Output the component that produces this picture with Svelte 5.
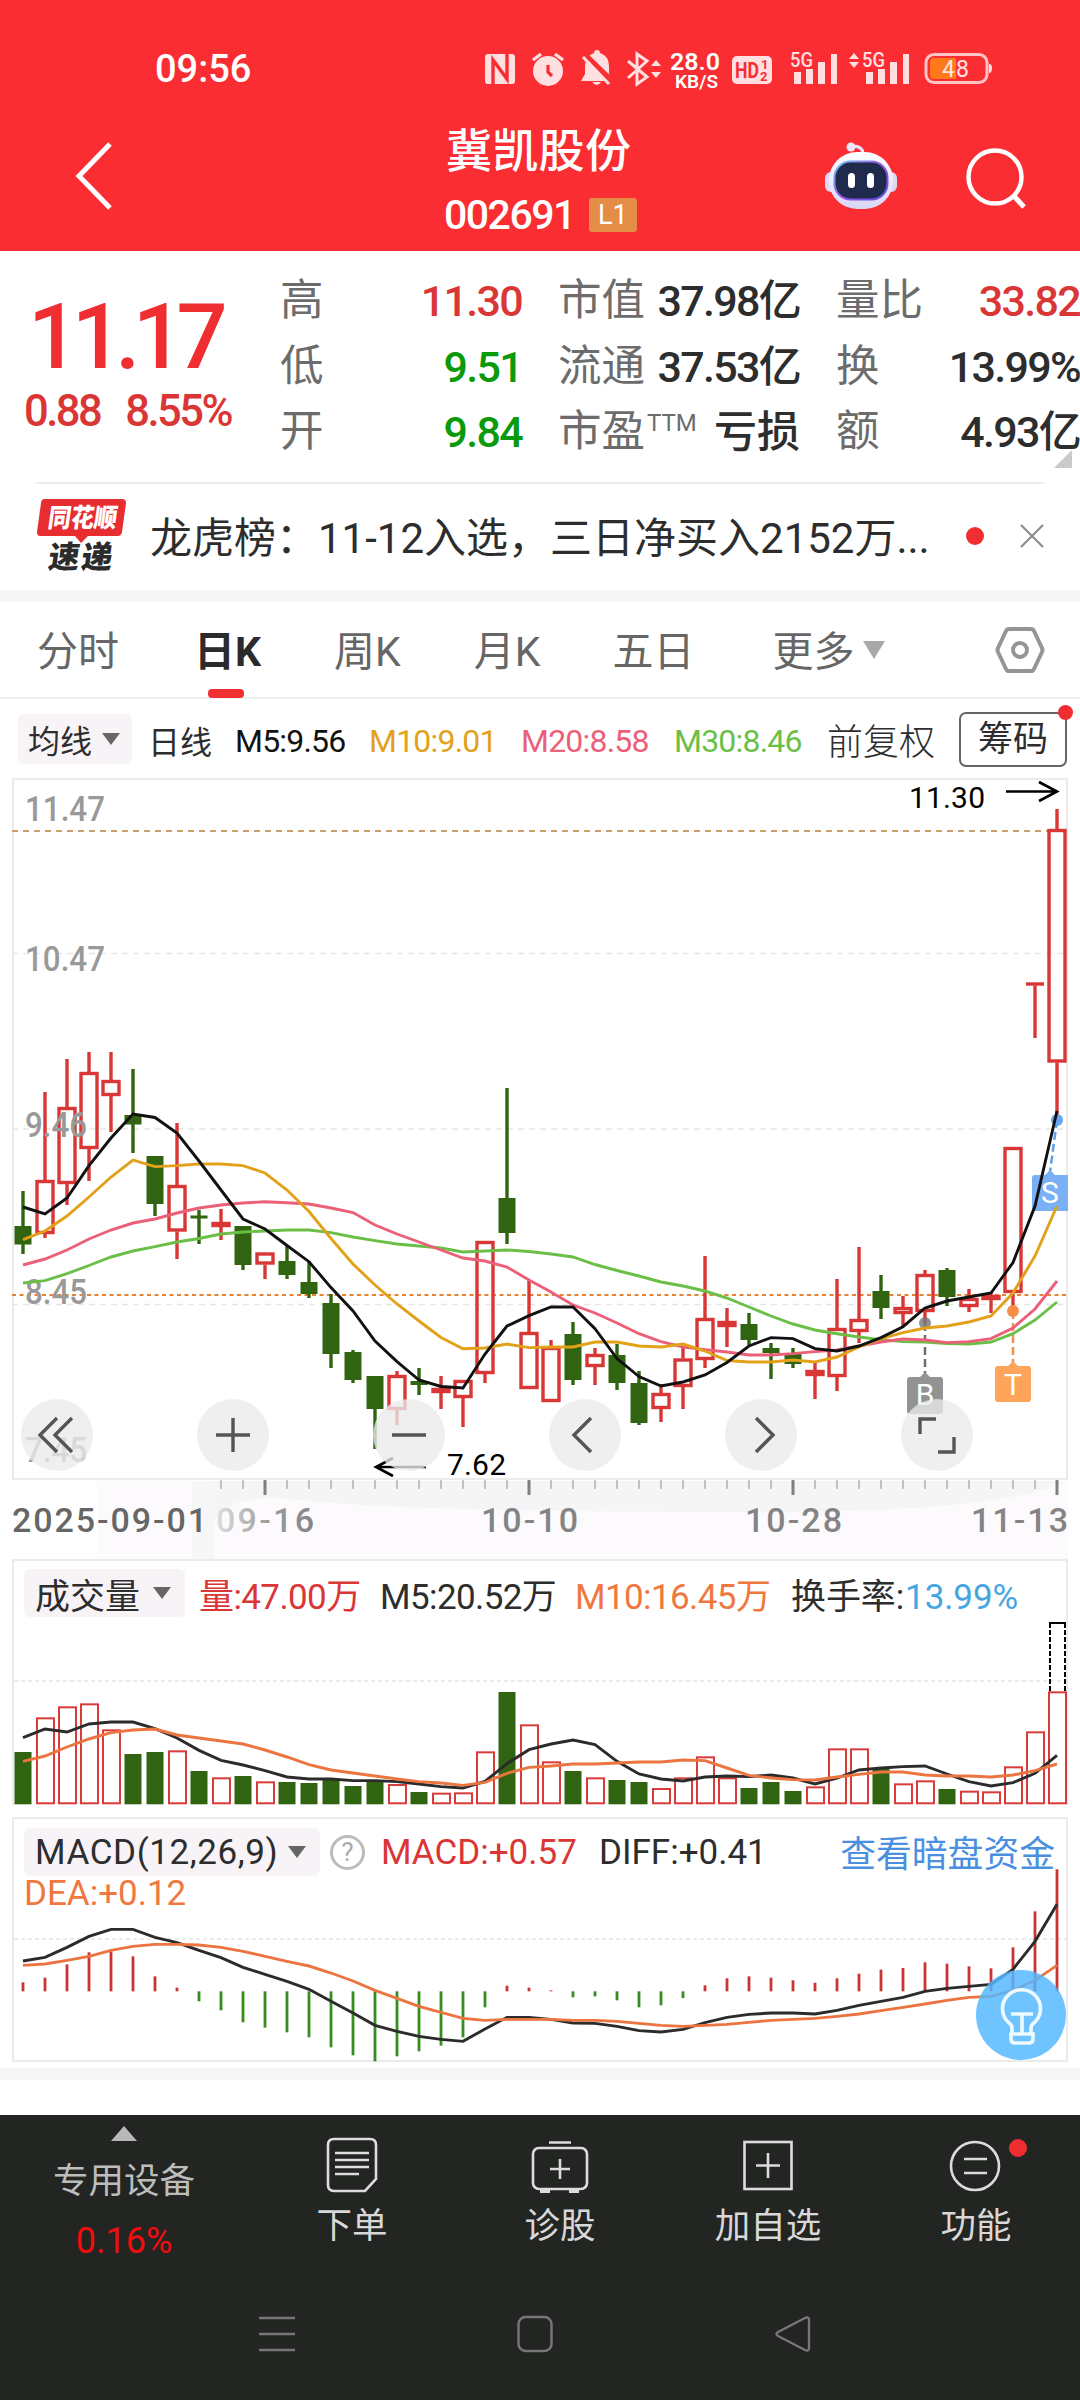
<script lang="ts">
  interface Candle {
    up: boolean;
    high: number;
    top: number;
    bottom: number;
    low: number;
  }

  const STEP = 22;
  const START = 23;
  const x = (i: number) => START + i * STEP;

  // [up, high, body top, body bottom, low] in plot units
  const rawCandles: number[][] = [
    [0, 1191, 1226, 1244.5, 1254], [1, 1092, 1180, 1234, 1238], [1, 1059, 1107, 1184, 1205],
    [1, 1052, 1072, 1149, 1181], [1, 1052, 1080, 1096, 1132], [0, 1069, 1115, 1124.5, 1153],
    [0, 1156, 1156, 1204, 1216], [1, 1123, 1185, 1231.5, 1259], [0, 1210, 1215.5, 1218.5, 1244],
    [1, 1209, 1222, 1227, 1240], [0, 1226, 1226, 1265, 1270], [1, 1252.5, 1252.5, 1264.5, 1279],
    [0, 1245, 1261, 1275, 1279], [0, 1261, 1282, 1294, 1298], [0, 1294, 1303, 1354, 1368],
    [0, 1350, 1352, 1380, 1383], [0, 1376, 1376, 1409, 1449], [1, 1371, 1375, 1410, 1425],
    [0, 1368, 1381, 1385, 1395], [1, 1376, 1388, 1393, 1409], [1, 1380, 1380, 1398, 1427],
    [1, 1241, 1241, 1374, 1383], [0, 1088, 1198, 1233, 1244], [1, 1280, 1332, 1389, 1389],
    [1, 1340, 1347, 1402, 1402], [0, 1322, 1334, 1380, 1385], [1, 1348, 1354, 1367, 1385],
    [0, 1344, 1355, 1383, 1390], [0, 1371, 1383, 1423, 1425], [1, 1384, 1393, 1409, 1422],
    [1, 1346, 1358.5, 1387, 1409], [1, 1256, 1318, 1360, 1368], [1, 1308, 1321, 1327, 1347],
    [0, 1313, 1324, 1340, 1345], [0, 1343, 1348, 1353, 1379], [0, 1348, 1354, 1364, 1368],
    [1, 1363, 1370, 1376, 1399], [1, 1279, 1328, 1377, 1391], [1, 1247, 1319, 1332, 1343],
    [0, 1275, 1291, 1308, 1319], [1, 1296, 1307, 1314, 1326], [1, 1270, 1274, 1312, 1323],
    [0, 1268, 1270, 1297, 1306], [1, 1289, 1298, 1307, 1312], [1, 1292, 1295, 1300, 1313],
    [1, 1147, 1147, 1293, 1312], [1, 982.5, 982.5, 985.5, 1038], [1, 809, 829, 1062.5, 1120],
  ];
  const candles: Candle[] = rawCandles.map(([up, high, top, bottom, low]) => ({
    up: up === 1, high, top, bottom, low,
  }));

  const averages = [
    { color: "#6abf47", values: [1283, 1280.6, 1273.6, 1265.5, 1257, 1251, 1246.6, 1242, 1238.5, 1234, 1232, 1231, 1230, 1230, 1232.6, 1237, 1240.6, 1244, 1246, 1248, 1252, 1251, 1250, 1251.5, 1254, 1257, 1264.5, 1270.5, 1276, 1282, 1286, 1291, 1298, 1307, 1316, 1324, 1330, 1333.7, 1337, 1339.6, 1341.6, 1342, 1343.6, 1344, 1342, 1333.7, 1320, 1302] },
    { color: "#ec5f78", values: [1265, 1259, 1250, 1239, 1230, 1223, 1219, 1213, 1208, 1205, 1203, 1201.7, 1202.8, 1204, 1208, 1212.6, 1225, 1234, 1242, 1250, 1258, 1261, 1267, 1280, 1292, 1305, 1313, 1323, 1333.7, 1341.6, 1347, 1349.6, 1352, 1355, 1355, 1353.6, 1351.6, 1350, 1346, 1342, 1339, 1340, 1342.6, 1341.6, 1338.6, 1328, 1309, 1281] },
    { color: "#e3a11a", values: [1239.6, 1231, 1216, 1197, 1177, 1160, 1166.6, 1165.6, 1164, 1164, 1165.6, 1173, 1190, 1211.5, 1238.5, 1264, 1285, 1304, 1321, 1337.5, 1348.7, 1348, 1344, 1347.6, 1347, 1347, 1342, 1342, 1346, 1347, 1344, 1351, 1360.5, 1362, 1362, 1360, 1362, 1357, 1347, 1338.6, 1332.7, 1328, 1326, 1322, 1316, 1293, 1256, 1206] },
    { color: "#111111", values: [1207, 1214, 1198, 1165.6, 1138, 1114, 1117.5, 1133, 1161, 1190, 1219, 1229, 1245.5, 1261.7, 1287.6, 1311, 1341, 1361.6, 1380, 1386.5, 1388, 1354, 1326, 1315.7, 1307, 1307, 1328.7, 1358.5, 1376.5, 1386, 1382, 1375, 1362.5, 1346, 1337.6, 1338.6, 1348.6, 1351, 1346, 1337.6, 1326.7, 1308, 1301, 1297, 1293, 1262.5, 1206, 1111] },
  ];

  // Lower panels are stored in thirds of a pixel
  const volumes = [636, 532, 499, 490, 568, 642, 636, 631, 693, 712, 708, 724, 726, 729, 720, 738, 726, 732, 756, 758, 757, 634, 456, 553, 664, 693, 712, 720, 726, 744, 712, 649, 712, 744, 726, 753, 739, 625, 625, 684, 730, 721, 747, 752, 754, 679, 574, 454];
  const volumeDown = [0, 5, 6, 8, 10, 12, 13, 14, 15, 16, 18, 22, 25, 27, 28, 33, 34, 35, 39, 42];
  const volM5 = [593, 567, 576, 552, 546, 546, 566, 594, 631, 661, 675, 692, 711, 717, 717, 722, 722, 725, 732, 740, 744, 724, 671, 629, 612, 600, 614, 664, 702, 717, 723, 711, 708, 710, 705, 714, 732, 714, 690, 684, 680, 678, 702, 725, 738, 728, 700, 646];
  const volM10 = [664, 648, 621, 597, 578, 570, 567, 585, 594, 603, 612, 630, 651, 674, 690, 699, 708, 717, 725, 729, 736, 727, 700, 682, 678, 672, 672, 669, 666, 666, 660, 662, 684, 706, 714, 719, 720, 711, 703, 696, 696, 705, 708, 708, 711, 705, 692, 672];
  const volY = (v: number) => (v - 57) / 3;

  const ZERO = 573;
  const macd = [546, 532, 492, 456, 454, 468, 528, 562, 603, 630, 666, 682, 696, 711, 741, 765, 783, 768, 753, 736, 711, 621, 556, 562, 570, 591, 588, 600, 621, 615, 593, 555, 534, 528, 532, 540, 547, 534, 520, 508, 503, 486, 490, 498, 504, 441, 333, 207];
  const diff = [482, 471, 441, 408, 387, 387, 411, 427, 450, 472, 501, 522, 543, 567, 603, 638, 675, 693, 708, 717, 723, 686, 651, 651, 657, 668, 669, 678, 691, 695, 687, 667, 651, 642, 638, 638, 641, 630, 615, 603, 591, 573, 564, 558, 552, 507, 423, 312];
  const dea = [495, 491, 480, 468, 450, 438, 432, 432, 434, 441, 453, 468, 483, 497, 518, 542, 570, 594, 618, 636, 654, 660, 657, 657, 657, 660, 660, 663, 669, 675, 678, 675, 672, 666, 660, 657, 654, 648, 641, 631, 621, 611, 600, 591, 588, 570, 540, 495];
  const macdY = (v: number) => (v - 50) / 3;

  const line = (values: number[], y = (v: number) => v) =>
    values.map((v, i) => `${x(i)},${y(v)}`).join(" ");

  const ticks = Array.from({ length: 39 }, (_, i) => i + 9);
  const isMajor = (i: number) => i % 12 === 11;

  const priceLabels = [
    { text: "11.47", y: 821, w: 80 },
    { text: "10.47", y: 971, w: 80 },
    { text: "9.46", y: 1137, w: 62 },
    { text: "8.45", y: 1304, w: 62 },
    { text: "7.45", y: 1462, w: 62 },
  ];
  const dates = [
    { text: "2025-09-01", x: 12, w: 195, color: "#666" },
    { text: "09-16", x: 216, w: 98, color: "url(#fade)" },
    { text: "10-10", x: 481, w: 97, color: "#848484" },
    { text: "10-28", x: 745, w: 97, color: "#848484" },
    { text: "11-13", x: 971, w: 97, color: "#848484" },
  ];

  const tabs = [
    { name: "分时", left: 37 },
    { name: "日K", left: 75 },
    { name: "周K", left: 73 },
    { name: "月K", left: 73 },
    { name: "五日", left: 72 },
    { name: "更多", left: 78 },
  ];
  let activeTab = "日K";

  const controls = [
    "M51 19 L34 36 L51 53 M36 19 L19 36 L36 53",
    "M19 36 H53 M36 19 V53",
    "M19 36 H53",
    "M42 19 L25 36 L42 53",
    "M31 19 L48 36 L31 53",
    "M19 35 V20 H35 M53 38 V53 H37",
  ];
</script>

<main class="page">
  <header class="top">
    <div class="status">
      <span class="clock">09:56</span>
      <svg class="status-icons" viewBox="480 40 520 60" width="520" height="60">
        <g fill="#ffdfe0">
          <rect x="485" y="54" width="30" height="30" rx="3" />
          <path d="M493 84 V60 L507 79 V54" fill="none" stroke="#fa2d33" stroke-width="3.4" />
          <circle cx="548" cy="71" r="15" />
          <path d="M533 60 L541 54 M563 60 L555 54" stroke="#ffdfe0" stroke-width="3.4" />
          <path d="M548 65 V72 L552 76" fill="none" stroke="#fa2d33" stroke-width="3.2" />
          <path d="M594 53 a3 3 0 0 1 6 0 q9 3 9 13 v8 l3 7 h-31 l4 -7 v-8 q0 -10 9 -13z M592 82 h9 q-4 6 -9 0z" />
          <path d="M583 54 L613 83" stroke="#fa2d33" stroke-width="7" />
          <path d="M583 57 L609 84" stroke="#ffdfe0" stroke-width="3" />
          <path d="M628 61 L647 77 L637 84 V54 L647 61 L628 78" fill="none" stroke="#ffdfe0" stroke-width="3" />
          <path d="M651 66 l5 -6 l5 6z M651 72 h10 l-5 6z" />
          <rect x="732" y="56" width="40" height="28" rx="5" />
          <path d="M794 72h7v12h-7z M806 69h7v15h-7z M818 62h7v22h-7z M831 54h6v30h-6z" />
          <path d="M866 72h7v12h-7z M878 69h7v15h-7z M890 62h7v22h-7z M903 54h6v30h-6z" />
          <path d="M849 59 l5 -6 l5 6z M849 62 h10 l-5 6z" />
          <path d="M989 64 q3 0 3 4 q0 5 -3 5z" />
        </g>
        <text x="670" y="69.500" font-size="24" font-weight="600" fill="#fff" textLength="50" lengthAdjust="spacingAndGlyphs">28.0</text>
        <text x="675" y="87.500" font-size="17.500" font-weight="600" fill="#fff" textLength="43" lengthAdjust="spacingAndGlyphs">KB/S</text>
        <text x="735" y="78" font-size="22" font-weight="700" fill="#fa2d33" textLength="24" lengthAdjust="spacingAndGlyphs">HD</text>
        <text x="761" y="69" font-size="13" font-weight="700" fill="#fa2d33">1</text>
        <text x="760" y="81" font-size="13" font-weight="700" fill="#fa2d33">2</text>
        <text x="790" y="67" font-size="20" font-weight="500" fill="#ffdfe0" textLength="23" lengthAdjust="spacingAndGlyphs">5G</text>
        <text x="862" y="67" font-size="20" font-weight="500" fill="#ffdfe0" textLength="23" lengthAdjust="spacingAndGlyphs">5G</text>
        <rect x="926" y="54.500" width="61" height="28" rx="8" fill="none" stroke="#ffc4c5" stroke-width="3" />
        <path d="M956 58 H934 q-4 0 -4 4 v13 q0 4 4 4 H956z" fill="#ff7a1c" />
        <text x="942" y="77" font-size="23" fill="#ffe4e0" textLength="27">48</text>
      </svg>
    </div>
    <div class="title-bar">
      <svg class="back" width="40" height="70" viewBox="0 0 40 70"><path d="M35 3 L4 35 L35 67" fill="none" stroke="#fff" stroke-width="5" /></svg>
      <div class="stock">
        <h1>冀凯股份</h1>
        <p><span class="code">002691</span><span class="level">L1</span></p>
      </div>
      <svg class="robot" width="72" height="68" viewBox="0 0 72 68">
        <defs>
          <linearGradient id="shell" x1="0" y1="0" x2="0" y2="1"><stop offset="0" stop-color="#fff" /><stop offset="1" stop-color="#d9d6f6" /></linearGradient>
          <linearGradient id="rim" x1="0" y1="0" x2="1" y2="1"><stop offset="0" stop-color="#6fc8f2" /><stop offset=".5" stop-color="#9a52e8" /><stop offset="1" stop-color="#5c4fd8" /></linearGradient>
        </defs>
        <path d="M38 12 q0 -8 -11 -8" fill="none" stroke="#e9e4f8" stroke-width="3" />
        <circle cx="26" cy="5" r="4.500" fill="#ece6fb" />
        <rect x="0" y="30" width="14" height="20" rx="6" fill="#ddd8f6" />
        <rect x="58" y="30" width="14" height="20" rx="6" fill="#ddd8f6" />
        <rect x="4" y="10" width="64" height="57" rx="28" fill="url(#shell)" />
        <rect x="9.500" y="19.500" width="53" height="38" rx="16" fill="#1f2a4d" stroke="url(#rim)" stroke-width="2" />
        <rect x="23" y="31" width="7" height="15" rx="3.500" fill="#fff" />
        <rect x="42" y="31" width="7" height="15" rx="3.500" fill="#fff" />
      </svg>
      <svg class="search" width="64" height="64" viewBox="0 0 64 64"><circle cx="30" cy="30" r="26.500" fill="none" stroke="#fff" stroke-width="4.500" /><path d="M48 48 L59 60" stroke="#fff" stroke-width="5" /></svg>
    </div>
  </header>

  <section class="quote">
    <div class="price">
      <strong>11.17</strong>
      <p><span>0.88</span><span>8.55%</span></p>
    </div>
    <dl class="metrics first">
      <div><dt>高</dt><dd class="red">11.30</dd></div>
      <div><dt>低</dt><dd class="green">9.51</dd></div>
      <div><dt>开</dt><dd class="green">9.84</dd></div>
    </dl>
    <dl class="metrics second">
      <div><dt>市值</dt><dd>37.98亿</dd></div>
      <div><dt>流通</dt><dd>37.53亿</dd></div>
      <div><dt>市盈<sup>TTM</sup></dt><dd class="loss">亏损</dd></div>
    </dl>
    <dl class="metrics third">
      <div><dt>量比</dt><dd class="red">33.82</dd></div>
      <div><dt>换</dt><dd>13.99%</dd></div>
      <div><dt>额</dt><dd>4.93亿</dd></div>
    </dl>
    <i class="corner"></i>
  </section>

  <section class="news">
    <svg class="brand" width="90" height="76" viewBox="0 0 90 76">
      <path d="M7 0 H85 q4 0 4 4 L85 33 q-1 4 -4 4 H51 L44 44 L38 37 H3 q-3 0 -3 -4 L4 4 q0 -4 4 -4z" fill="#e82d30" />
      <text x="14" y="28" font-size="26" font-weight="900" fill="#fff" textLength="69" lengthAdjust="spacingAndGlyphs" transform="skewX(-8)">同花顺</text>
      <text x="20" y="69" font-size="31" font-weight="900" fill="#2b2b2b" textLength="64" transform="skewX(-8)">速递</text>
    </svg>
    <p>龙虎榜：11-12入选，三日净买入2152万...</p>
    <i class="dot"></i>
    <svg width="26" height="26" viewBox="0 0 26 26"><path d="M2 2 L24 24 M24 2 L2 24" stroke="#8e8e8e" stroke-width="2.200" /></svg>
  </section>

  <nav class="tabs">
    {#each tabs as tab (tab.name)}
      <button
        class="tab"
        class:active={tab.name === activeTab}
        style="margin-left: {tab.left}px"
        on:click={() => (activeTab = tab.name)}
      >{tab.name}</button>
    {/each}
    <i class="caret big"></i>
    <svg class="gear" width="50" height="48" viewBox="0 0 50 48">
      <path d="M14 3 H36 q2 0 3 2 L47 22 q1 2 0 4 L39 43 q-1 2 -3 2 H14 q-2 0 -3 -2 L3 26 q-1 -2 0 -4 L11 5 q1 -2 3 -2z" fill="none" stroke="#959595" stroke-width="4" />
      <circle cx="25" cy="24" r="7" fill="none" stroke="#959595" stroke-width="4" />
    </svg>
  </nav>

  <div class="ma-row">
    <span class="pill">均线<i class="caret"></i></span>
    <span class="period">日线</span>
    <span class="ma m5">M5:9.56</span>
    <span class="ma m10">M10:9.01</span>
    <span class="ma m20">M20:8.58</span>
    <span class="ma m30">M30:8.46</span>
    <span class="adjust">前复权</span>
    <span class="chips">筹码<i class="dot"></i></span>
  </div>

  <section class="kline">
    <svg width="1080" height="781" viewBox="0 778 1080 781">
      <defs>
        <linearGradient id="fade"><stop offset="0" stop-color="#dedede" /><stop offset=".5" stop-color="#a0a0a0" /><stop offset="1" stop-color="#848484" /></linearGradient>
      </defs>
      <!-- soft band behind the date axis -->
      <rect x="97" y="1481" width="971" height="78" fill="#fdfafd" />
      <rect x="192" y="1481" width="22" height="78" fill="#f7f7f7" />
      <path d="M214 1481 H1068 Q1000 1512 760 1512 Q400 1512 300 1500 Q230 1492 214 1520z" fill="#f6f5f6" />
      <rect x="13" y="779" width="1054" height="700" fill="#fff" stroke="#ebebeb" stroke-width="2" />

      <path d="M12 953.500 H1067 M12 1129 H1067 M12 1304.500 H1067" stroke="#e6e6e6" stroke-width="1.500" stroke-dasharray="6 5" />
      <path d="M12 831 H1048" stroke="#c9a06b" stroke-width="2" stroke-dasharray="6 5" />
      <path d="M12 1295 H1067" stroke="#e8822f" stroke-width="2" stroke-dasharray="4 3.500" />

      {#each candles as c, i}
        {#if c.up}
          <g stroke="#d93636" stroke-width="3.400" fill="none">
            <path d="M{x(i)} {c.high} V{c.top} M{x(i)} {c.bottom} V{c.low}" />
            {#if c.bottom - c.top > 4}
              <rect x={x(i) - 8} y={c.top + 1.5} width="16" height={c.bottom - c.top - 3} />
            {:else}
              <path d="M{x(i) - 9} {(c.top + c.bottom) / 2} h18" />
            {/if}
          </g>
        {:else}
          <path d="M{x(i)} {c.high} V{c.low}" stroke="#306410" stroke-width="3.400" />
          <rect x={x(i) - 8.5} y={c.top} width="17" height={c.bottom - c.top} fill="#306410" />
        {/if}
      {/each}

      {#each priceLabels as label}
        <text x="25" y={label.y} class="price-label" textLength={label.w} lengthAdjust="spacingAndGlyphs">{label.text}</text>
      {/each}

      <!-- trade markers -->
      <g fill="none" stroke-width="2.500" stroke-dasharray="8 4">
        <path d="M925 1323 V1375" stroke="#6e6e6e" />
        <path d="M1013 1311 V1363" stroke="#f0924a" />
        <path d="M1057 1120 L1050 1172" stroke="#5b9df0" />
      </g>
      <circle cx="925" cy="1323" r="6" fill="#777" opacity=".8" />
      <circle cx="1013" cy="1311" r="6" fill="#f58d48" />
      <circle cx="1057" cy="1120" r="6" fill="#6ba5ef" />
      <path d="M910 1377 h10 l5 -5 l5 5 h10 q3 0 3 3 v31 q0 3 -3 3 h-30 q-3 0 -3 -3 v-31 q0 -3 3 -3z" fill="#929392" />
      <path d="M998 1366 h10 l5 -5 l5 5 h10 q3 0 3 3 v30 q0 3 -3 3 h-30 q-3 0 -3 -3 v-30 q0 -3 3 -3z" fill="#fea55b" />
      <path d="M1035 1175 h10 l5 -5 l5 5 h13 v36 h-33 q-3 0 -3 -3 v-30 q0 -3 3 -3z" fill="#7ab0f5" />
      <g class="marker" text-anchor="middle">
        <text x="925" y="1405">B</text>
        <text x="1013" y="1395">T</text>
        <text x="1050" y="1203">S</text>
      </g>

      {#each averages as avg}
        <polyline points={line(avg.values)} fill="none" stroke={avg.color} stroke-width="2.900" />
      {/each}

      <g class="extreme">
        <text x="909" y="808" textLength="76">11.30</text>
        <text x="447" y="1475" textLength="59">7.62</text>
        <path d="M1006 791.500 H1057 M1039 782 L1057 791.500 L1039 801" />
        <path d="M426 1467 H376 M393 1458 L376 1467 L393 1476" />
      </g>

      {#each ticks as i}
        <path
          d="M{x(i)} 1480 V{isMajor(i) ? 1495 : 1489}"
          stroke={isMajor(i) ? "#808080" : "#a0a0a0"}
          stroke-width={isMajor(i) ? 3 : 1.2}
        />
      {/each}
      {#each dates as d}
        <text x={d.x} y="1532" class="date" fill={d.color} textLength={d.w}>{d.text}</text>
      {/each}
    </svg>
    <div class="controls">
      {#each controls as icon}
        <button aria-label="chart control"><svg width="72" height="72" viewBox="0 0 72 72"><path d={icon} fill="none" stroke="#555" stroke-width="3.400" /></svg></button>
      {/each}
    </div>
  </section>

  <section class="panel volume">
    <svg class="plot" width="1080" height="246" viewBox="0 0 1080 246">
      <path d="M13 246 V1 H1067 V246" fill="none" stroke="#ebebeb" stroke-width="2" />
      <path d="M14 122 H1067" stroke="#e6e6e6" stroke-width="1.500" stroke-dasharray="4 3" />
      {#each volumes as v, i}
        {#if volumeDown.includes(i)}
          <rect x={x(i) - 8.5} y={volY(v)} width="17" height={245.3 - volY(v)} fill="#306410" />
        {:else}
          <rect x={x(i) - 8} y={volY(v) + 1} width="17" height={243.3 - volY(v)} fill="#fff" stroke="#d93a3a" stroke-width="2" />
        {/if}
      {/each}
      <path d="M1050 132 V63 M1065 132 V63" stroke="#000" stroke-width="2" stroke-dasharray="5 2" />
      <path d="M1049 64 H1066" stroke="#000" stroke-width="2" />
      <polyline points={line(volM5, volY)} fill="none" stroke="#2b2b2b" stroke-width="2.900" />
      <polyline points={line(volM10, volY)} fill="none" stroke="#ec7440" stroke-width="2.900" />
    </svg>
    <div class="legend">
      <span class="pill">成交量<i class="caret"></i></span>
      <span class="vol red">量:47.00万</span>
      <span class="vol5">M5:20.52万</span>
      <span class="vol10 orange">M10:16.45万</span>
      <span class="rate">换手率:<em>13.99%</em></span>
    </div>
  </section>

  <section class="panel macd">
    <svg class="plot" width="1080" height="246" viewBox="0 0 1080 246">
      <rect x="13" y="1" width="1054" height="243" fill="none" stroke="#ebebeb" stroke-width="2" />
      <path d="M14 122 H1067" stroke="#e6e6e6" stroke-width="1.500" stroke-dasharray="4 3" />
      {#each macd as v, i}
        <path d="M{x(i)} {macdY(ZERO)} V{macdY(v)}" stroke={v > ZERO ? "#348f20" : "#c93434"} stroke-width="2.800" />
      {/each}
      <polyline points={line(diff, macdY)} fill="none" stroke="#2b2b2b" stroke-width="2.900" />
      <polyline points={line(dea, macdY)} fill="none" stroke="#ec7440" stroke-width="2.900" />
    </svg>
    <div class="legend">
      <span class="pill">MACD(12,26,9)<i class="caret"></i></span>
      <span class="help">?</span>
      <span class="macd-value red">MACD:+0.57</span>
      <span class="diff-value">DIFF:+0.41</span>
      <a href="#fund">查看暗盘资金</a>
    </div>
    <p class="dea orange">DEA:+0.12</p>
    <button class="bulb" aria-label="tips">
      <svg width="90" height="90" viewBox="0 0 90 90">
        <g fill="none" stroke="#eefaff" stroke-width="3.600">
          <path d="M36 64 V58 q0 -3 -3 -5 a19 19 0 1 1 25 0 q-3 2 -3 5 V64" />
          <path d="M35 64 H57 V69 q0 4 -4 4 H39 q-4 0 -4 -4z M35 44 H57 M46 44 V64" />
        </g>
      </svg>
    </button>
  </section>

  <footer class="bottom">
    <div class="actions">
      <div class="sector">
        <i class="up"></i>
        <span>专用设备</span>
        <b>0.16%</b>
      </div>
      <div class="action order">
        <svg width="60" height="60" viewBox="0 0 60 60"><g fill="none" stroke="#dcdcdc" stroke-width="2.600"><path d="M12 4 H48 q6 0 6 6 V44 L43 56 H12 q-6 0 -6 -6 V10 q0 -6 6 -6z" /><path d="M13 18 H47 M13 25 H47 M13 32 H47 M13 39 H37" /></g></svg>
        <span>下单</span>
      </div>
      <div class="action check">
        <svg width="60" height="60" viewBox="0 0 60 60"><g fill="none" stroke="#dcdcdc" stroke-width="2.600"><rect x="3" y="13" width="54" height="41" rx="6" /><path d="M19 7.500 H41 M20 34 H40 M30 24 V44" /><path d="M10 56 h10 M39 56 h10" stroke-width="4" /></g></svg>
        <span>诊股</span>
      </div>
      <div class="action add">
        <svg width="60" height="60" viewBox="0 0 60 60"><g fill="none" stroke="#dcdcdc" stroke-width="2.600"><rect x="6.500" y="7" width="47" height="47" /><path d="M18 30.500 H42 M30 18 V43" /></g></svg>
        <span>加自选</span>
      </div>
      <div class="action more">
        <svg width="60" height="60" viewBox="0 0 60 60"><g fill="none" stroke="#dcdcdc" stroke-width="2.600"><circle cx="29" cy="31" r="24" /><path d="M18 24 H41 M18 38 H41" /></g></svg>
        <span>功能</span>
        <i class="dot"></i>
      </div>
    </div>
    <div class="system">
      <svg width="40" height="40" viewBox="0 0 40 40"><path d="M2 4 H38 M2 20 H38 M2 36 H38" stroke="#777" stroke-width="2.600" /></svg>
      <svg width="40" height="40" viewBox="0 0 40 40"><rect x="3.500" y="3" width="33" height="34" rx="7" fill="none" stroke="#777" stroke-width="2.400" /></svg>
      <svg width="40" height="40" viewBox="0 0 40 40"><path d="M32 4 L5 18 q-3 2 0 4 L32 36 q4 2 4 -2 V6 q0 -4 -4 -2z" fill="none" stroke="#777" stroke-width="2.400" /></svg>
    </div>
  </footer>
</main>

<style>
  :global(body) {
    margin: 0;
    background: #fff;
  }

  .page {
    width: 1080px;
    height: 2400px;
    display: flex;
    flex-direction: column;
    overflow: hidden;
    background: #fff;
    color: #2d2d2d;
    font-family: Roboto, "Noto Sans CJK SC", sans-serif;
  }

  .page * {
    box-sizing: border-box;
  }

  svg {
    display: block;
    flex: none;
  }

  p, h1, dl, dd {
    margin: 0;
  }

  button {
    border: none;
    padding: 0;
    background: none;
    font-family: inherit;
  }

  span {
    white-space: nowrap;
  }

  .red { color: #db3636; }
  .green { color: #0a9a0a; }
  .orange { color: #f0783f; }

  .dot {
    width: 18px;
    height: 18px;
    border-radius: 50%;
    background: #f02e31;
  }

  .top {
    height: 251px;
    flex: none;
    background: #fa2d33;
    color: #fff;
  }

  .status {
    height: 110px;
    padding: 40px 80px 0 155px;
    display: flex;
    justify-content: space-between;
  }

  .clock {
    font-size: 38px;
    font-weight: 500;
    line-height: 58px;
  }

  .title-bar {
    display: flex;
    height: 141px;
  }

  .back { margin: 31px 0 0 75px; }

  .stock {
    width: 200px;
    margin-left: 331px;
  }

  .stock h1 {
    font-size: 46px;
    font-weight: 500;
    line-height: 60px;
    margin-top: 11px;
    letter-spacing: 0.3px;
  }

  .stock p {
    display: flex;
    align-items: center;
    height: 48px;
    margin-top: 10px;
    margin-left: -2px;
  }

  .code {
    font-size: 41px;
    font-weight: 500;
    letter-spacing: -1.5px;
  }

  .level {
    width: 48px;
    height: 34px;
    margin-left: 14px;
    border-radius: 3px;
    background: #e38d47;
    font-size: 27px;
    line-height: 35px;
    text-align: center;
  }

  .robot { margin: 32px 0 0 179px; }
  .search { margin: 37px 0 0 68px; }

  .quote {
    position: relative;
    height: 231px;
    flex: none;
    display: flex;
    padding-top: 18px;
  }

  .price {
    width: 280px;
    color: #ee2e30;
  }

  .price strong {
    display: block;
    padding-left: 28px;
    margin-top: 24px;
    font-size: 90px;
    font-weight: 500;
    line-height: 90px;
    letter-spacing: -7.5px;
  }

  .price p {
    display: flex;
    gap: 25px;
    padding-left: 24px;
    margin-top: 4px;
    color: #db3636;
    font-size: 43.500px;
    font-weight: 500;
    line-height: 50px;
    letter-spacing: -2.500px;
  }

  .metrics div {
    display: flex;
    justify-content: space-between;
    height: 65.500px;
    line-height: 64px;
    font-size: 43px;
  }

  .first { width: 242px; }
  .second { width: 242px; margin-left: 36px; }
  .third { width: 244px; margin-left: 36px; }

  dt {
    color: #6c6c6c;
    font-size: 43.500px;
  }

  dd {
    font-weight: 500;
    letter-spacing: -1.700px;
    white-space: nowrap;
  }

  .loss { letter-spacing: 0; }

  sup {
    font-size: 24px;
    line-height: 0;
    vertical-align: 15px;
    margin-left: 2px;
  }

  .corner {
    position: absolute;
    right: 8px;
    bottom: 14px;
    border-left: 18px solid transparent;
    border-bottom: 18px solid #cacaca;
  }

  .news {
    height: 120px;
    flex: none;
    display: flex;
    align-items: center;
    border-bottom: 12px solid #f6f6f6;
    background: linear-gradient(#ededed, #ededed) 36px 0 / 1008px 2px no-repeat;
  }

  .brand { margin-left: 37px; margin-top: 2px; }

  .news p {
    width: 788px;
    margin: -3px 0 0 23px;
    font-size: 42px;
    white-space: nowrap;
  }

  .news .dot { margin: 0 35px 0 28px; }

  .tabs {
    height: 97px;
    flex: none;
    display: flex;
    align-items: center;
    border-bottom: 2px solid #efefef;
  }

  .tab {
    position: relative;
    height: 96px;
    font-size: 41px;
    line-height: 101px;
    font-weight: 400;
    color: #666;
  }

  .tab.active {
    font-weight: 700;
    color: #2b2b2b;
  }

  .tab.active::after {
    content: "";
    position: absolute;
    left: 50%;
    bottom: 0;
    width: 36px;
    height: 9px;
    margin-left: -20px;
    border-radius: 4px;
    background: #ef2f31;
  }

  .caret {
    border: 9px solid transparent;
    border-top: 12px solid #666;
    border-bottom: none;
  }

  .caret.big {
    border-width: 18px 11px 0;
    border-top-color: #a8a8a8;
    margin-left: 8px;
  }

  .gear { margin-left: auto; margin-right: 35px; }

  .ma-row {
    height: 80px;
    flex: none;
    display: flex;
    align-items: center;
    margin-bottom: -1px;
    font-size: 32px;
  }

  .pill {
    display: flex;
    align-items: center;
    justify-content: space-between;
    border-radius: 6px;
    background: #f7f3f7;
  }

  .ma-row .pill {
    width: 114px;
    height: 50px;
    margin-left: 18px;
    padding: 0 12px 0 10px;
  }

  .period { width: 87px; margin-left: 16px; padding-top: 2px; }
  .ma { padding-top: 4px; letter-spacing: -0.8px; }
  .m5 { width: 134px; color: #111; }
  .m10 { width: 152px; color: #e3a11a; }
  .m20 { width: 153px; color: #ec5f78; }
  .m30 { width: 153px; color: #6abf47; }
  .adjust { width: 132px; font-size: 36px; font-weight: 300; }

  .chips {
    position: relative;
    width: 108px;
    height: 55px;
    border: 2px solid #666;
    border-radius: 7px;
    font-size: 35px;
    line-height: 52px;
    text-align: center;
  }

  .chips .dot {
    position: absolute;
    top: -9px;
    right: -8px;
    width: 15px;
    height: 15px;
  }

  .kline {
    position: relative;
    height: 781px;
    flex: none;
  }

  .price-label {
    font-size: 35px;
    font-weight: 500;
    fill: #999;
  }

  .marker {
    font-size: 30px;
    fill: #fff;
  }

  .extreme {
    font-size: 30px;
    fill: #000;
  }

  .extreme path {
    fill: none;
    stroke: #000;
    stroke-width: 2.600;
  }

  .date {
    font-size: 34px;
    font-weight: 500;
  }

  .controls {
    position: absolute;
    left: 21px;
    top: 621px;
    display: flex;
    gap: 104px;
  }

  .controls button {
    width: 72px;
    height: 72px;
    border-radius: 50%;
    background: rgba(234, 234, 234, 0.78);
  }

  .panel {
    position: relative;
    flex: none;
    height: 258px;
    padding-top: 11px;
  }

  .plot {
    position: absolute;
    left: 0;
    top: 0;
  }

  .legend {
    position: relative;
    display: flex;
    align-items: center;
    height: 48px;
    font-size: 35px;
  }

  .volume { padding-top: 10px; }
  .volume .legend { letter-spacing: -0.6px; }

  .legend .pill {
    width: 161px;
    height: 48px;
    margin-left: 24px;
    padding: 0 14px 0 11px;
    letter-spacing: 0;
  }

  .vol { width: 181px; margin-left: 14px; }
  .vol5 { width: 195px; }
  .vol10 { width: 216px; }

  .rate {
    letter-spacing: -0.1px;
  }

  .rate em {
    margin-left: 1px;
    font-style: normal;
    color: #45a6e2;
  }

  .macd { height: 251px; }

  .macd .legend .pill {
    width: 296px;
    letter-spacing: 0.600px;
  }

  .help {
    width: 35px;
    height: 35px;
    margin-left: 10px;
    border: 3px solid #bcbcbc;
    border-radius: 50%;
    color: #aaa;
    font-size: 26px;
    line-height: 29px;
    text-align: center;
  }

  .macd-value { width: 218px; margin-left: 16px; }

  .legend a {
    margin: -3px 25px 0 auto;
    color: #4a8fe0;
    text-decoration: none;
    font-size: 35.800px;
  }

  .dea {
    position: relative;
    padding-left: 24px;
    font-size: 35px;
    line-height: 36px;
  }

  .bulb {
    position: absolute;
    left: 976px;
    top: 153px;
    width: 90px;
    height: 90px;
    border-radius: 50%;
    background: rgba(84, 184, 255, 0.84);
  }

  .bottom {
    flex: none;
    height: 332px;
    border-top: 12px solid #f6f6f6;
    padding-top: 35px;
    background: linear-gradient(#fff 35px, #222522 35px);
    color: #d8d8d8;
  }

  .actions {
    display: flex;
    height: 180px;
    font-size: 35.500px;
  }

  .sector, .action {
    display: flex;
    flex-direction: column;
    align-items: center;
  }

  .sector {
    width: 248px;
    color: #bdbdbd;
  }

  .sector span {
    margin-top: 14px;
    line-height: 52px;
  }

  .sector b {
    margin-top: 6px;
    line-height: 56px;
    font-weight: 400;
    font-size: 36px;
    color: #f00d0d;
  }

  .up {
    margin-top: 11px;
    border: 13px solid transparent;
    border-bottom: 15px solid #b8b8b8;
    border-top: none;
  }

  .action {
    position: relative;
    width: 208px;
    padding-top: 20px;
  }

  .action span {
    line-height: 52px;
    margin-top: 5px;
  }

  .action .dot {
    position: absolute;
    left: 137px;
    top: 24px;
  }

  .system {
    display: flex;
    gap: 218px;
    padding: 19px 0 0 257px;
  }
</style>
